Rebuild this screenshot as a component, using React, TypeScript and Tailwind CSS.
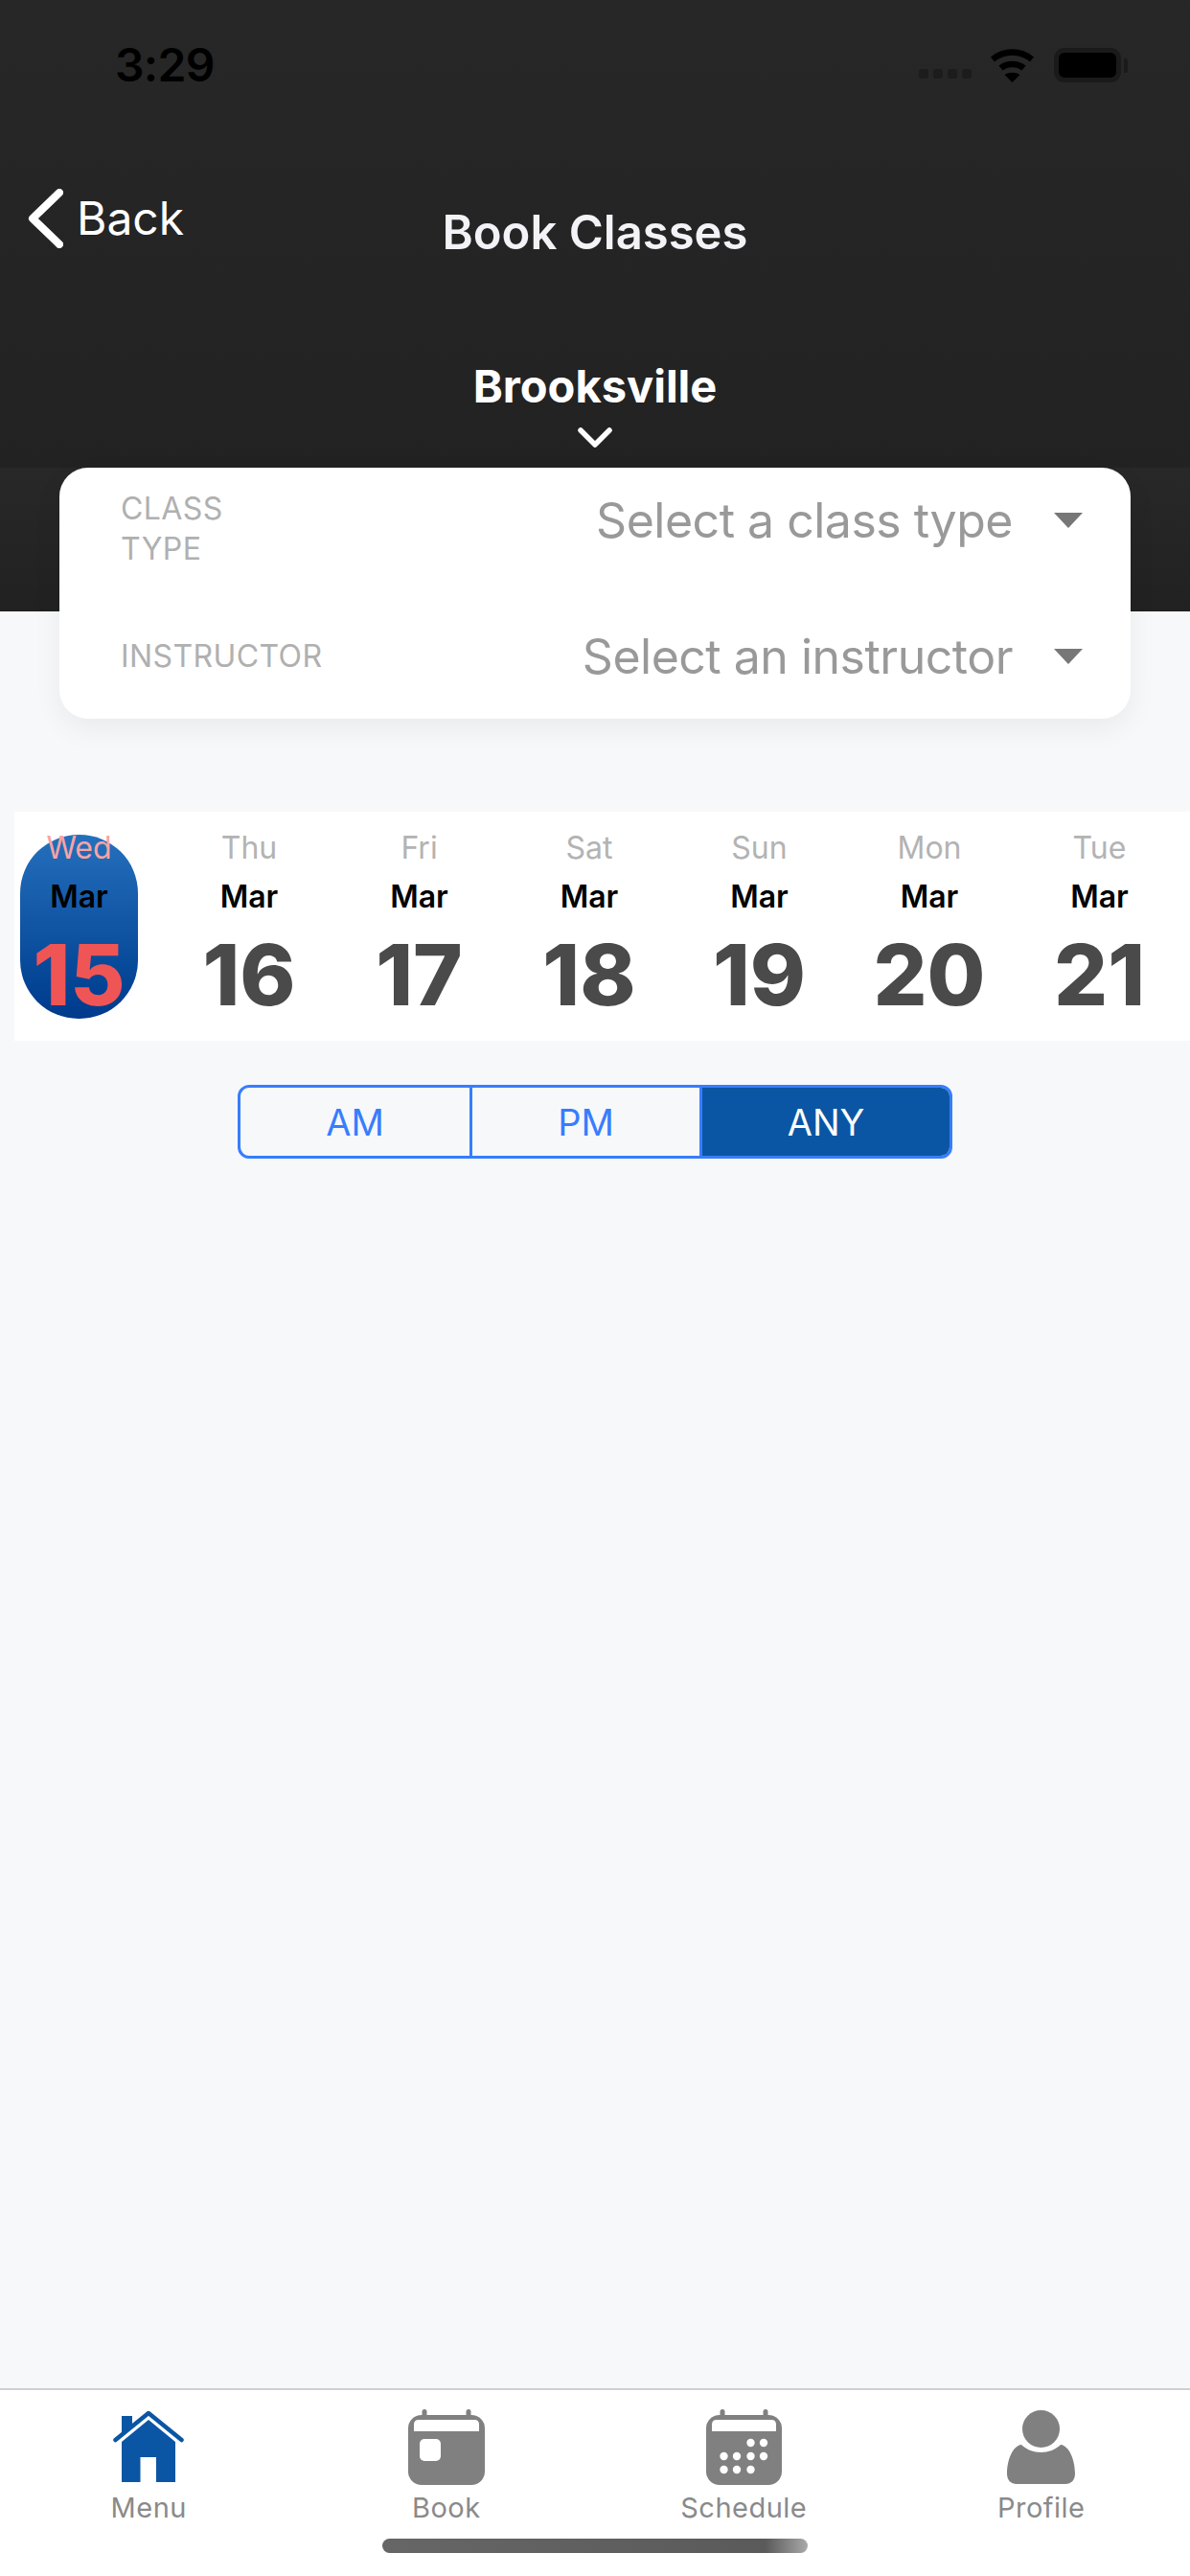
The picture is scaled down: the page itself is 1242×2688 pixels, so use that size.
const days = [
  { day: 'Wed', date: '15', active: true },
  { day: 'Thu', date: '16' },
  { day: 'Fri', date: '17' },
  { day: 'Sat', date: '18' },
  { day: 'Sun', date: '19' },
  { day: 'Mon', date: '20' },
  { day: 'Tue', date: '21' },
];

function WifiIcon() {
  return (
    <svg width="47" height="36" viewBox="0 0 47 36" fill="none">
      <path d="M3 12 C15 2 32 2 44 12" stroke="#000" strokeWidth="6.5" />
      <path d="M11.5 21 C18 15.5 29 15.5 35.5 21" stroke="#000" strokeWidth="6.5" />
      <path d="M15.5 28 C20 25 27 25 31.5 28 L23.5 36 Z" fill="#000" />
    </svg>
  );
}

function HomeIcon() {
  return (
    <svg width="74" height="74" viewBox="0 0 74 74" fill="none">
      <path d="M9 32 L37 9 L65 32 V74 H45 V48 H28.5 V74 H9 Z" fill="#0a56a4" />
      <path d="M2.5 30 L37 2 L71.5 30" stroke="#0a56a4" strokeWidth="4.5" strokeLinecap="round" strokeLinejoin="round" />
      <path d="M9 5 H20 V14 L9 23 Z" fill="#0a56a4" />
    </svg>
  );
}

function CalendarShell({ children, width }: { children?: React.ReactNode; width: number }) {
  const right = width - 17;
  return (
    <svg width={width} height="79" viewBox={`0 0 ${width} 79`} fill="none">
      <rect x="14.5" y="0" width="5" height="12" rx="2.5" fill="#808080" />
      <rect x={right - 2.5} y="0" width="5" height="12" rx="2.5" fill="#808080" />
      <rect x="0" y="6" width={width} height="73" rx="14" fill="#808080" />
      <path d={`M6 23 V16 Q6 11 11 11 H${width - 11} Q${width - 6} 11 ${width - 6} 16 V23 Z`} fill="#fff" />
      {children}
    </svg>
  );
}

function BookIcon() {
  return (
    <CalendarShell width={80}>
      <rect x="12" y="31" width="22" height="23" rx="5" fill="#fff" />
    </CalendarShell>
  );
}

function ScheduleIcon() {
  const dots = [
    [46.5, 35], [60, 35],
    [18.5, 49], [32, 49], [46.5, 49], [60, 49],
    [18.5, 63], [32, 63], [46.5, 63],
  ];
  return (
    <CalendarShell width={79}>
      {dots.map(([cx, cy]) => (
        <circle key={`${cx}-${cy}`} cx={cx} cy={cy} r="4.2" fill="#fff" />
      ))}
    </CalendarShell>
  );
}

function ProfileIcon() {
  return (
    <svg width="71" height="77" viewBox="0 0 71 77" fill="#808080">
      <ellipse cx="35.5" cy="19.5" rx="19.5" ry="19.5" />
      <path d="M15 36 C20 41 28 44 35.5 44 C43 44 51 41 56 36 C65 37 71 52 71 66 C71 73 67 77 61 77 H10 C4 77 0 73 0 66 C0 52 6 37 15 36 Z" />
    </svg>
  );
}

function Caret() {
  return (
    <svg width="30" height="16" viewBox="0 0 30 16" fill="#777">
      <path d="M0 0 H30 L15 16 Z" />
    </svg>
  );
}

const tabs = [
  { label: 'Menu', icon: <HomeIcon /> },
  { label: 'Book', icon: <BookIcon /> },
  { label: 'Schedule', icon: <ScheduleIcon /> },
  { label: 'Profile', icon: <ProfileIcon /> },
];

export default function App() {
  return (
    <div className="relative flex h-[2688px] w-[1242px] flex-col overflow-hidden bg-[#f7f8fa] font-['Inter','Liberation_Sans',sans-serif]">
      {/* header */}
      <div className="h-[638px] bg-[#252525]">
        <div className="h-[488px] bg-gradient-to-b from-[#272727] to-[#222222]">
          <div className="flex h-[136px] items-center justify-between pl-[120px] pr-[65px]">
            <span className="text-[48px] font-semibold leading-none tracking-[-0.7px] text-black">3:29</span>
            <div className="flex items-center">
              <div className="mt-[17px] flex gap-[5px]">
                <span className="h-[10px] w-[10px] rounded-[3px] bg-[#1c1c1c]" />
                <span className="h-[10px] w-[10px] rounded-[3px] bg-[#1c1c1c]" />
                <span className="h-[10px] w-[10px] rounded-[3px] bg-[#1c1c1c]" />
                <span className="h-[10px] w-[10px] rounded-[3px] bg-[#1c1c1c]" />
              </div>
              <div className="ml-[19px]">
                <WifiIcon />
              </div>
              <div className="ml-[20px] flex items-center">
                <div className="h-[36px] w-[70px] rounded-[11px] border-[5px] border-[#1a1a1a] bg-black" />
                <div className="ml-[3px] h-[15px] w-[4px] rounded-r-[3px] bg-[#1a1a1a]" />
              </div>
            </div>
          </div>
          <div className="grid grid-cols-[1fr_auto_1fr] items-start">
            <div className="mt-[61px] flex h-[62px] items-center pl-[29px]">
              <svg width="37" height="62" viewBox="0 0 37 62" fill="none">
                <path d="M33 4 L5 31 L33 58" stroke="#fff" strokeWidth="8" strokeLinecap="round" strokeLinejoin="round" />
              </svg>
              <span className="ml-[14px] text-[48px] leading-none text-white">Back</span>
            </div>
            <div className="mt-[78px] text-[49px] font-semibold leading-[58px] text-[#f2f2f7]">Book Classes</div>
          </div>
          <div className="mt-[106px] flex flex-col items-center">
            <span className="text-[47px] font-bold leading-[50px] text-white">Brooksville</span>
            <svg className="mt-[17px]" width="36" height="24" viewBox="0 0 36 24" fill="none">
              <path d="M3 4 L18 19 L33 4" stroke="#fff" strokeWidth="5.5" strokeLinecap="round" strokeLinejoin="round" />
            </svg>
          </div>
        </div>
        <div className="h-[150px] bg-gradient-to-b from-[#282828] to-[#212121]" />
      </div>

      {/* filters card */}
      <div className="mx-[62px] -mt-[150px] h-[262px] rounded-[30px] bg-white shadow-[0_10px_30px_rgba(0,0,0,0.06)]">
        <div className="flex h-[132px] items-start pl-[64px] pr-[50px] pt-[22px]">
          <div className="text-[32px] leading-[42px] tracking-[0.4px] text-[#b0b0b0]">
            CLASS
            <br />
            TYPE
          </div>
          <span className="ml-auto mt-[3px] text-[50px] leading-[60px] tracking-[-0.5px] text-[#999999]">Select a class type</span>
          <div className="ml-[43px] mt-[25px] flex">
            <Caret />
          </div>
        </div>
        <div className="flex h-[130px] items-center pl-[64px] pr-[50px]">
          <span className="text-[32px] leading-[42px] tracking-[0.4px] text-[#b0b0b0]">INSTRUCTOR</span>
          <span className="ml-auto text-[50px] leading-[60px] tracking-[-0.5px] text-[#999999]">Select an instructor</span>
          <div className="ml-[43px] flex">
            <Caret />
          </div>
        </div>
      </div>

      {/* date strip */}
      <div className="ml-[15px] mt-[97px] flex h-[239px] items-center gap-[54.5px] bg-white pl-[6px]">
        {days.map((d) => (
          <div
            key={d.date}
            className={`flex h-[192px] w-[123px] shrink-0 flex-col items-center rounded-[61px] ${
              d.active ? 'bg-gradient-to-b from-[#2470bd] to-[#003a8c]' : ''
            }`}
          >
            <span className={`mt-[1px] text-[32px] leading-[26px] ${d.active ? 'text-[#f9a3a3]' : 'text-[#b3b3b3]'}`}>
              {d.day}
            </span>
            <span className="mt-[23px] text-[32px] font-semibold leading-[30px] text-black">Mar</span>
            <span
              className={`mt-[21px] text-[88px] font-extrabold leading-[90px] ${
                d.active ? 'text-[#f05555]' : 'text-[#4a4a4a]'
              }`}
            >
              {d.date}
            </span>
          </div>
        ))}
      </div>

      {/* am / pm toggle */}
      <div className="mx-auto mt-[46px] flex h-[77px] w-[746px] overflow-hidden rounded-[12px] border-[3px] border-[#377dff] text-[38px] leading-none">
        <div className="flex w-[239px] items-center justify-center text-[#377dff]">AM</div>
        <div className="flex w-[240px] items-center justify-center border-l-[3px] border-[#377dff] text-[#377dff]">PM</div>
        <div className="flex flex-1 items-center justify-center border-l-[3px] border-[#377dff] bg-[#0a56a4] text-white">ANY</div>
      </div>

      {/* tab bar */}
      <div className="mt-auto grid h-[196px] grid-cols-4 border-t-[2px] border-[#d0d0d0] bg-white">
        {tabs.map((t) => (
          <div key={t.label} className="flex flex-col items-center pt-[19px]">
            <div className="flex h-[80px] items-center">{t.icon}</div>
            <span className="mt-[7px] text-[29px] leading-[34px] tracking-[0.5px] text-[#8a8a8a]">{t.label}</span>
          </div>
        ))}
      </div>

      {/* home indicator */}
      <div className="absolute bottom-[24px] left-[399px] h-[15px] w-[444px] rounded-full bg-gradient-to-r from-[#666666] via-[#5a5a5a] via-90% to-[#aaaaaa]" />
    </div>
  );
}
